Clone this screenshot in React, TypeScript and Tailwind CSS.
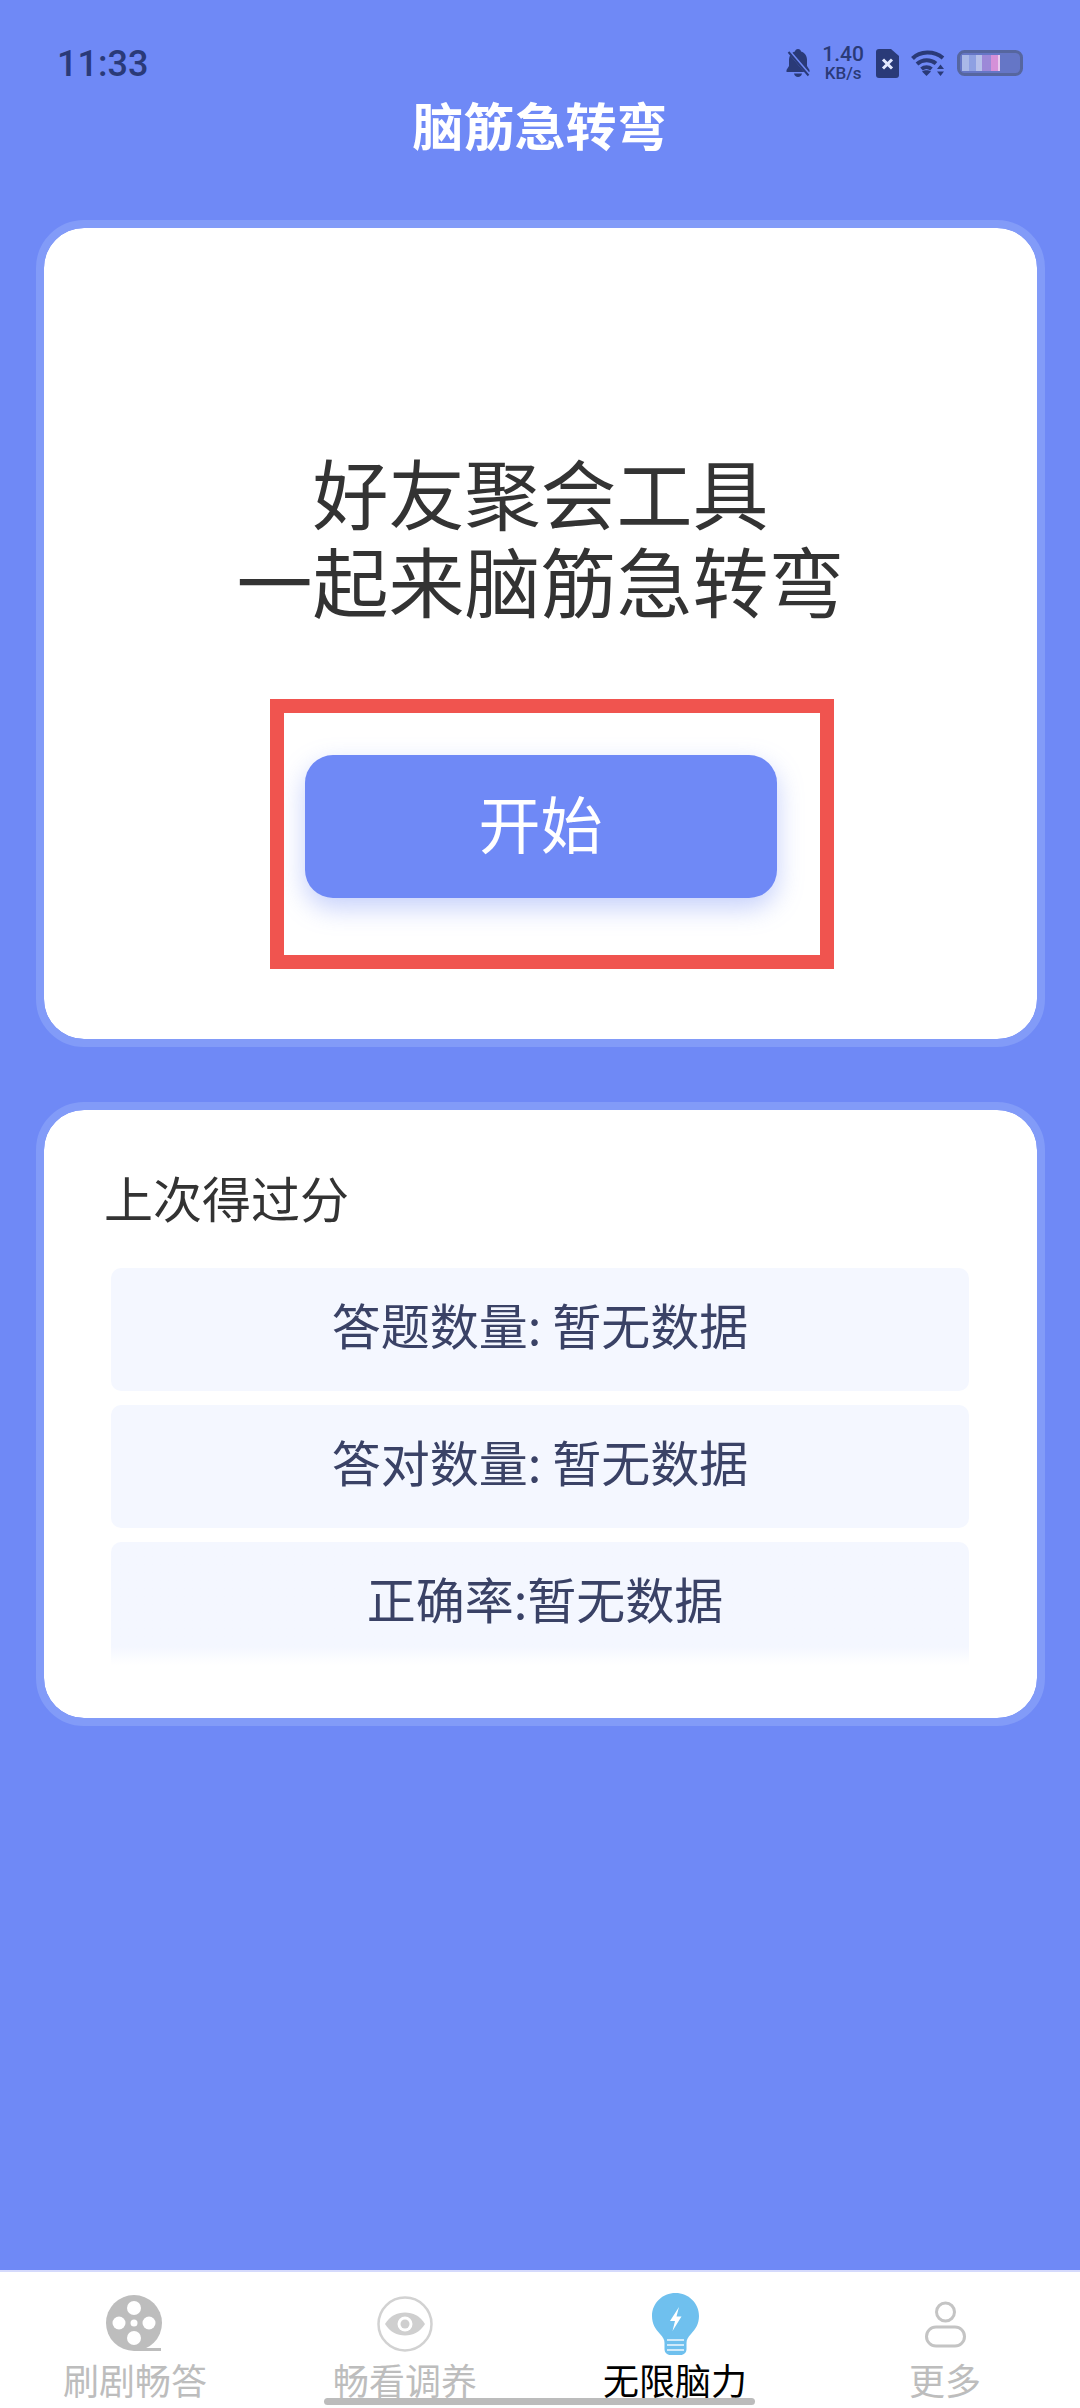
const cjk = "font-['Noto_Sans_CJK_SC','Noto_Sans',sans-serif]"

function BellOff() {
  return (
    <svg width="24" height="28" viewBox="0 0 24 28" fill="none">
      <path d="M12 0c-1.700 0-2.800 1-3 2.400C5 3.600 3 7 3 11v6l-2.500 4v2h23v-2L21 17v-6c0-4-2-7.400-6-8.600C14.800 1 13.700 0 12 0z" fill="#2a3a78" />
      <path d="M8 24.500h8c-.4 2-2 3.500-4 3.500s-3.600-1.500-4-3.500z" fill="#2a3a78" />
      <path d="M1 0l23 27" stroke="#6f89f6" strokeWidth="3.500" />
      <path d="M2.500 3l20 23.500" stroke="#2a3a78" strokeWidth="2" />
    </svg>
  )
}

function SimX() {
  return (
    <svg width="23" height="29" viewBox="0 0 23 29">
      <path d="M3 0h12l8 7v19a3 3 0 0 1-3 3H3a3 3 0 0 1-3-3V3a3 3 0 0 1 3-3z" fill="#2a3a78" />
      <path d="M7 10.500l9 9M16 10.500l-9 9" stroke="#e4e9ff" strokeWidth="3" />
    </svg>
  )
}

function Wifi() {
  return (
    <svg width="34" height="26" viewBox="0 0 34 26" fill="none" stroke="#2a3a78" strokeWidth="4">
      <path d="M1.500 8.500C9 .8 23 .5 32 8" />
      <path d="M6 14c5.500-5 13.500-5 19-.5" />
      <path d="M10.500 19c3-2.500 7-2.500 10 0" />
      <path d="M15.500 26l-4.500-4.500c2.500-1.800 6.500-1.800 9 0z" fill="#2a3a78" stroke="none" />
      <path d="M29.500 14.500l-3.500 4.500h7zM29.500 26l-3.500-4.500h7z" fill="#2a3a78" stroke="none" />
    </svg>
  )
}

function Battery() {
  return (
    <svg width="66" height="26" viewBox="0 0 66 26">
      <rect x="1.500" y="1.500" width="63" height="23" rx="6" fill="#6576c6" stroke="#56669f" strokeWidth="3" />
      <rect x="5" y="5" width="7" height="16" fill="#a9b8e8" />
      <rect x="12" y="5" width="7" height="16" fill="#8ea0e2" />
      <rect x="19" y="5" width="6" height="16" fill="#b6c0ea" />
      <rect x="25" y="5" width="9" height="16" fill="#9c88d8" />
      <rect x="34" y="5" width="7" height="16" fill="#d590d8" />
      <rect x="41" y="5" width="2" height="16" fill="#e8c8ee" />
    </svg>
  )
}

function Reel() {
  return (
    <svg width="58" height="58" viewBox="0 0 58 58">
      <circle cx="28" cy="28" r="28" fill="#bdbdbd" />
      <rect x="28" y="53" width="27" height="3" fill="#bdbdbd" />
      <circle cx="28" cy="13" r="7" fill="#fff" />
      <circle cx="28" cy="43" r="7" fill="#fff" />
      <circle cx="13" cy="28" r="6.500" fill="#fff" />
      <circle cx="43" cy="28" r="6.500" fill="#fff" />
      <circle cx="28" cy="28" r="3.500" fill="#fff" />
    </svg>
  )
}

function EyeCircle() {
  return (
    <svg width="56" height="56" viewBox="0 0 56 56">
      <circle cx="28" cy="28" r="26.500" fill="none" stroke="#d2d2d2" strokeWidth="2.500" />
      <path d="M8 28c5-8 12-11.500 20-11.500S43 20 48 28c-5 8-12 11.500-20 11.500S13 36 8 28z" fill="#cfcfcf" />
      <circle cx="28" cy="28" r="7.500" fill="#fff" />
      <circle cx="28" cy="28" r="4.500" fill="#cfcfcf" />
    </svg>
  )
}

function Bulb() {
  return (
    <svg width="47" height="62" viewBox="0 0 47 62">
      <path d="M23.500 0C10.500 0 0 10 0 23c0 8 3.500 13 8 18 3 3.300 4.500 5.500 4.500 9v6c0 3.500 2.500 6 6 6h10c3.500 0 6-2.500 6-6v-6c0-3.500 1.500-5.700 4.500-9 4.500-5 8-10 8-18C47 10 36.500 0 23.500 0z" fill="#6fc0ee" />
      <path d="M27 14l-9 14h5l-2.500 10 9-14.500h-5z" fill="#fff" />
      <path d="M15 47h17M15 52h17M15 57h17" stroke="#cfeafa" strokeWidth="2" />
    </svg>
  )
}

function Person() {
  return (
    <svg width="41" height="47" viewBox="0 0 41 47" fill="none" stroke="#c4c4c4" strokeWidth="3">
      <circle cx="20.500" cy="11" r="9" />
      <rect x="1.500" y="26" width="38" height="19" rx="9.500" />
    </svg>
  )
}

function StatRow({ text, shifted, faded }: { text: string; shifted?: boolean; faded?: boolean }) {
  return (
    <div
      className={`h-[123px] pb-[11px] flex items-center justify-center rounded-t-[10px] text-[49px] text-[#3a4266] ${
        faded ? 'bg-gradient-to-b from-[#f4f7ff] from-85% to-[#ffffff]' : 'rounded-b-[10px] bg-[#f4f7ff]'
      } ${shifted ? 'pl-[10px]' : ''}`}
    >
      {text}
    </div>
  )
}

function Tab({ label, active, children }: { label: string; active?: boolean; children: React.ReactNode }) {
  return (
    <div className="flex-1 flex flex-col items-center">
      <div className="h-[62px] flex items-center justify-center">{children}</div>
      <div className={`mt-[2px] h-[44px] leading-[44px] text-[36px] ${active ? 'text-black' : 'text-[#bdbdbd]'}`}>
        {label}
      </div>
    </div>
  )
}

export default function App() {
  return (
    <div className={`relative h-[2408px] w-[1080px] overflow-hidden flex flex-col bg-[#6f89f6] ${cjk}`}>
      {/* status bar */}
      <div className="mt-[39px] h-[50px] pl-[57px] pr-[57px] flex items-center justify-between text-[#2a3a78]">
        <span className="font-['Roboto',sans-serif] text-[36px] font-medium">11:33</span>
        <div className="flex items-center gap-[12px] mt-[-2px]">
          <BellOff />
          <div className="flex flex-col items-center font-['Roboto',sans-serif] font-medium">
            <span className="text-[21px] leading-[21px]">1.40</span>
            <span className="text-[17px] leading-[17px]">KB/s</span>
          </div>
          <SimX />
          <Wifi />
          <Battery />
        </div>
      </div>

      <div className="h-[70px] leading-[70px] text-center text-[51px] font-bold text-white">脑筋急转弯</div>

      <main className="flex-1 pt-[61px] pl-[36px] pr-[35px]">
        <section className="h-[827px] rounded-[48px] border-[8px] border-[#829bf8] bg-white bg-clip-padding flex flex-col items-center pt-[219px]">
          <h1 className="text-center text-[76px] leading-[88px] font-normal text-[#333333]">
            好友聚会工具
            <br />
            一起来脑筋急转弯
          </h1>
          <div className="relative mt-[132px]">
            <button className="w-[472px] h-[143px] pb-[8px] rounded-[28px] bg-[#6f89f6] text-[62px] text-white shadow-[0_10px_26px_rgba(111,137,246,0.4)]">
              开始
            </button>
            {/* annotation over the button */}
            <div className="absolute left-[-35px] right-[-57px] top-[-56px] bottom-[-71px] border-[14px] border-[#f0544f]" />
          </div>
        </section>

        <section className="mt-[55px] h-[624px] rounded-[48px] border-[8px] border-[#829bf8] bg-white bg-clip-padding pt-[53px] px-[60px]">
          <h2 className="text-[49px] leading-[68px] font-normal text-[#333333]">上次得过分</h2>
          <div className="mt-[37px] ml-[7px] mr-[8px] flex flex-col gap-[14px]">
            <StatRow text="答题数量: 暂无数据" />
            <StatRow text="答对数量: 暂无数据" />
            <StatRow text="正确率:暂无数据" shifted faded />
          </div>
        </section>
      </main>

      {/* tab bar */}
      <nav className="h-[138px] border-t-2 border-[#d5dafc] bg-white pt-[21px] flex">
        <Tab label="刷剧畅答">
          <Reel />
        </Tab>
        <Tab label="畅看调养">
          <EyeCircle />
        </Tab>
        <Tab label="无限脑力" active>
          <Bulb />
        </Tab>
        <Tab label="更多">
          <Person />
        </Tab>
      </nav>

      <div className="absolute left-[324px] bottom-[3px] h-[7px] w-[431px] rounded-full bg-[#bcbcbc]" />
    </div>
  )
}
